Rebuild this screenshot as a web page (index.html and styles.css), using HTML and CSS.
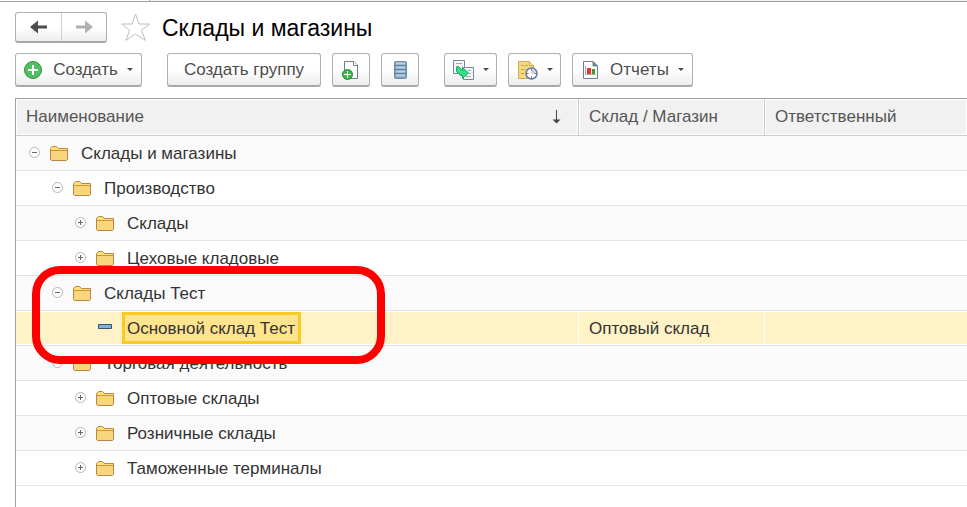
FILE: index.html
```html
<!DOCTYPE html>
<html lang="ru">
<head>
  <meta charset="UTF-8">
  <title>Склады и магазины</title>
  <link rel="stylesheet" href="styles.css">
</head>
<body>

  <svg class="sprite" aria-hidden="true">
    <symbol id="folder" viewBox="0 0 19 16">
      <path d="M1.5 14.5V3.5L3.5 1.5H7.5L9.5 3.5H18.5V14.5L17.5 15.5H2.5Z" fill="#f8d77c" stroke="#bd8543"/>
      <path d="M2 5V4L4 2H7L9 4H18V5Z" fill="#ffe36c"/>
      <path d="M2 5.5H18" stroke="#c8924c"/>
    </symbol>
    <symbol id="minus" viewBox="0 0 12 12">
      <circle cx="5.5" cy="5.5" r="5" fill="#fff" stroke="#b4b4b4"/>
      <path d="M3 5.5H8" stroke="#666"/>
    </symbol>
    <symbol id="plus" viewBox="0 0 12 12">
      <circle cx="5.5" cy="5.5" r="5" fill="#fff" stroke="#b4b4b4"/>
      <path d="M3 5.5H8M5.5 3V8" stroke="#666"/>
    </symbol>
  </svg>

  <div class="tab-strip"><div class="tab"></div></div>

  <main class="page">
    <header class="title-bar">
      <div class="nav-buttons">
        <button class="nav-button" aria-label="Назад">
          <svg width="18" height="14" viewBox="0 0 18 14"><path d="M0 7L8 0.500V5.500H17V8.500H8V13.500Z" fill="#4d4d4d"/></svg>
        </button>
        <button class="nav-button" aria-label="Вперед" disabled>
          <svg width="18" height="14" viewBox="0 0 18 14"><path d="M18 7L10 0.500V5.500H1V8.500H10V13.500Z" fill="#b0b0b0"/></svg>
        </button>
      </div>
      <button class="star" aria-label="В избранное">
        <svg width="30" height="29" viewBox="0 0 30 29"><path d="M14.500 1L18 11H28.500L20.500 17.300L24.300 27.300L14.500 21L5 27.300L8.500 17.300L0.800 11H11Z" fill="#fff" stroke="#b9bfc6"/></svg>
      </button>
      <h1>Склады и магазины</h1>
    </header>

    <div class="toolbar">
      <button class="btn btn-create">
        <svg width="20" height="20" viewBox="0 0 20 20">
          <circle cx="9" cy="10" r="8.500" fill="#4fbf60" stroke="#2e9440"/>
          <path d="M4 10H14M9 5V15" stroke="#fff" stroke-width="2"/>
        </svg>
        <span>Создать</span>
        <span class="caret"></span>
      </button>
      <button class="btn btn-group">Создать группу</button>
      <button class="btn btn-icon" aria-label="Создать копированием">
        <svg width="20" height="20" viewBox="0 0 20 20">
          <path d="M3.500 1.500H13L16.500 5V18.500H3.500Z" fill="#fff" stroke="#6f7f90"/>
          <path d="M12.500 1.500V5.500H16.500" fill="#fff" stroke="#6f7f90"/>
          <circle cx="6.500" cy="14.500" r="5" fill="#43b649" stroke="#2c8a3c"/>
          <path d="M3 14.500H10M6.500 11V18" stroke="#fff"/>
        </svg>
      </button>
      <button class="btn btn-icon" aria-label="Список">
        <svg width="20" height="20" viewBox="0 0 20 20">
          <rect x="4.500" y="1.500" width="12" height="17" rx="1" fill="#7fa1bd" stroke="#6d90ae"/>
          <path d="M6 3.500H15M6 7.500H15M6 11.500H15M6 15.500H15" stroke="#b9d2e4" stroke-width="2"/>
          <path d="M4 5.500H17M4 9.500H17M4 13.500H17" stroke="#6284a1"/>
        </svg>
      </button>
      <button class="btn btn-menu group-start" aria-label="Создать на основании">
        <svg width="22" height="22" viewBox="0 0 22 22">
          <path d="M0.500 1.500H11.500V14.500H0.500Z" fill="#f4f6f8" stroke="#76879a"/>
          <path d="M3 4.500H9M3 7.500H5" stroke="#9aa8b6"/>
          <path d="M10.500 8.500H20.500V20.500H10.500Z" fill="#f4f6f8" stroke="#76879a"/>
          <path d="M15 11.500H18M16 14.500H18M13 17.500H18" stroke="#9aa8b6"/>
          <path d="M3.500 8.500L5.500 7.500L9.500 11.500V8.500L15.500 14L9.500 19.500V16.500H7.500L3.500 12.500Z" fill="#2fe089" stroke="#16a45a" stroke-linejoin="round"/>
        </svg>
        <span class="caret"></span>
      </button>
      <button class="btn btn-menu" aria-label="Напоминание">
        <svg width="22" height="22" viewBox="0 0 22 22">
          <path d="M1.500 2.500H12.500L16.500 6.500V19.500H1.500Z" fill="#f4d981" stroke="#cfaa50"/>
          <path d="M12.500 2.500V6.500H16.500" fill="#fbeab0" stroke="#cfaa50"/>
          <path d="M4 6.500H11M4 10.500H9M4 14.500H7" stroke="#c8a14b" stroke-dasharray="3 1"/>
          <circle cx="14.500" cy="14.500" r="5.500" fill="#fff" stroke="#5580ac" stroke-width="1.500"/>
          <path d="M14.500 14.500V10.500A4 4 0 0 1 18.500 14.500Z" fill="#b5c9e6"/>
          <path d="M14.500 9.500V11.500M14.500 17.500V19.500M9.500 14.500H11.500M17.500 14.500H19.500" stroke="#e03c2c"/>
        </svg>
        <span class="caret"></span>
      </button>
      <button class="btn btn-reports">
        <svg width="20" height="20" viewBox="0 0 20 20">
          <path d="M2.500 1.500H12L16.500 6V18.500H2.500Z" fill="#fff" stroke="#6f7f90"/>
          <path d="M12 1.500V6H16.500Z" fill="#7d8d9c" stroke="#6f7f90"/>
          <path d="M4.500 6V14.500H15" fill="none" stroke="#a3afba"/>
          <path d="M6 8H10V14H6Z" fill="#e93524"/>
          <path d="M11 9H14V14H11Z" fill="#379b2e"/>
        </svg>
        <span>Отчеты</span>
        <span class="caret"></span>
      </button>
    </div>

    <div class="list">
      <table>
        <thead>
          <tr>
            <th class="col-name">
              <div class="sort-head">
                <span>Наименование</span>
                <svg width="9" height="14" viewBox="0 0 9 14"><path d="M4.500 0V11" stroke="#444"/><path d="M0.500 9.500H8.500L4.500 13.500Z" fill="#444"/></svg>
              </div>
            </th>
            <th class="col-type">Склад / Магазин</th>
            <th>Ответственный</th>
          </tr>
        </thead>
        <tbody>
          <tr>
            <td><div class="node">
              <button class="toggle" aria-label="Свернуть"><svg><use href="#minus"/></svg></button>
              <svg class="folder"><use href="#folder"/></svg>
              <span class="label">Склады и магазины</span>
            </div></td>
            <td></td><td></td>
          </tr>
          <tr>
            <td><div class="node level-1">
              <button class="toggle" aria-label="Свернуть"><svg><use href="#minus"/></svg></button>
              <svg class="folder"><use href="#folder"/></svg>
              <span class="label">Производство</span>
            </div></td>
            <td></td><td></td>
          </tr>
          <tr>
            <td><div class="node level-2">
              <button class="toggle" aria-label="Развернуть"><svg><use href="#plus"/></svg></button>
              <svg class="folder"><use href="#folder"/></svg>
              <span class="label">Склады</span>
            </div></td>
            <td></td><td></td>
          </tr>
          <tr>
            <td><div class="node level-2">
              <button class="toggle" aria-label="Развернуть"><svg><use href="#plus"/></svg></button>
              <svg class="folder"><use href="#folder"/></svg>
              <span class="label">Цеховые кладовые</span>
            </div></td>
            <td></td><td></td>
          </tr>
          <tr>
            <td><div class="node level-1">
              <button class="toggle" aria-label="Свернуть"><svg><use href="#minus"/></svg></button>
              <svg class="folder"><use href="#folder"/></svg>
              <span class="label">Склады Тест</span>
            </div></td>
            <td></td><td></td>
          </tr>
          <tr class="selected">
            <td><div class="node level-2">
              <span class="toggle"></span>
              <svg class="folder" viewBox="0 0 19 16"><path d="M3.500 4.500H16.500V8.500H3.500Z" fill="#7fb0d8" stroke="#2f5574"/></svg>
              <span class="label">Основной склад Тест</span>
            </div></td>
            <td>Оптовый склад</td><td></td>
          </tr>
          <tr>
            <td><div class="node level-1">
              <button class="toggle" aria-label="Свернуть"><svg><use href="#minus"/></svg></button>
              <svg class="folder"><use href="#folder"/></svg>
              <span class="label">Торговая деятельность</span>
            </div></td>
            <td></td><td></td>
          </tr>
          <tr>
            <td><div class="node level-2">
              <button class="toggle" aria-label="Развернуть"><svg><use href="#plus"/></svg></button>
              <svg class="folder"><use href="#folder"/></svg>
              <span class="label">Оптовые склады</span>
            </div></td>
            <td></td><td></td>
          </tr>
          <tr>
            <td><div class="node level-2">
              <button class="toggle" aria-label="Развернуть"><svg><use href="#plus"/></svg></button>
              <svg class="folder"><use href="#folder"/></svg>
              <span class="label">Розничные склады</span>
            </div></td>
            <td></td><td></td>
          </tr>
          <tr>
            <td><div class="node level-2">
              <button class="toggle" aria-label="Развернуть"><svg><use href="#plus"/></svg></button>
              <svg class="folder"><use href="#folder"/></svg>
              <span class="label">Таможенные терминалы</span>
            </div></td>
            <td></td><td></td>
          </tr>
        </tbody>
      </table>
      <div class="marker"></div>
    </div>
  </main>

</body>
</html>
```
FILE: styles.css
```css
* {
  box-sizing: border-box;
}
body {
  margin: 0;
  min-height: 100vh;
  display: flex;
  flex-direction: column;
  background-color: #fff;
  color: #333;
  font-family: "Liberation Sans", Arial, sans-serif;
  font-size: 17px;
  line-height: 20px;
}
button {
  font: inherit;
  color: #4d4d4d;
  padding: 0;
  border: none;
  background: none;
}
svg {
  display: block;
  flex: none;
}
.sprite {
  position: absolute;
  width: 0;
  height: 0;
}

/* top */
.tab-strip {
  height: 2px;
  background-color: #f2f2f2;
  border-bottom: 1px solid #a0a0a0;
}
.tab {
  width: 150px;
  height: 1px;
  background-color: #fff;
  border-right: 1px solid #a0a0a0;
}
.page {
  flex: 1;
  display: flex;
  flex-direction: column;
  padding: 10px 0 0 15px;
}
.title-bar {
  display: flex;
  align-items: center;
  height: 31px;
}
.nav-buttons {
  display: flex;
  height: 31px;
  border: 1px solid #b0b0b0;
  border-bottom: 2px solid #a8a8a8;
  border-radius: 3px;
  background: linear-gradient(#fff 50%, #ededed);
}
.nav-button {
  display: flex;
  align-items: center;
  justify-content: center;
  width: 45px;
}
.nav-button + .nav-button {
  border-left: 1px solid #d0d0d0;
}
.star {
  margin-left: 14px;
}
h1 {
  margin: 0 0 0 11px;
  color: #000;
  font-size: 23px;
  font-weight: normal;
  line-height: 28px;
}

/* toolbar */
.toolbar {
  display: flex;
  gap: 11px;
  margin-top: 10px;
}
.btn {
  display: flex;
  align-items: center;
  justify-content: center;
  height: 34px;
  border: 1px solid #b0b0b0;
  border-bottom: 2px solid #a8a8a8;
  border-radius: 3px;
  background: linear-gradient(#fff 50%, #ededed);
}
.btn-create {
  gap: 9px;
  width: 127px;
}
.btn-group {
  width: 154px;
  margin-left: 14px;
}
.btn-icon {
  width: 38px;
}
.btn-menu {
  gap: 8px;
  width: 53px;
}
.group-start {
  margin-left: 14px;
}
.btn-reports {
  gap: 9px;
  width: 121px;
}
.caret {
  border: 3px solid transparent;
  border-top-color: #4d4d4d;
  border-bottom: none;
}

/* list */
.list {
  position: relative;
  flex: 1;
  margin-top: 11px;
  border-top: 1px solid #a0a0a0;
  border-left: 1px solid #a0a0a0;
}
table {
  width: 100%;
  table-layout: fixed;
  border-spacing: 0;
}
th {
  height: 37px;
  padding: 0 10px;
  border-bottom: 1px solid #ccc;
  background-color: #f1f1f1;
  box-shadow: inset 0 0 0 1px #fff;
  color: #555;
  font-weight: normal;
  text-align: left;
}
th + th {
  border-left: 1px solid #ccc;
}
.col-name {
  width: 562px;
}
.col-type {
  width: 186px;
}
.sort-head {
  display: flex;
  align-items: center;
  justify-content: space-between;
  padding-right: 7px;
}
td {
  height: 35px;
  padding: 2px 11px 0;
  border-bottom: 1px solid #e4e4e4;
}
td:first-child {
  padding: 0;
}
tbody tr:nth-child(odd) {
  background-color: #fafafa;
}
.node {
  display: flex;
  align-items: center;
  gap: 8px;
  padding-left: 13px;
}
.level-1 {
  padding-left: 36px;
}
.level-2 {
  padding-left: 59px;
}
.toggle,
.toggle svg {
  width: 12px;
  height: 12px;
}
.folder {
  width: 19px;
  height: 16px;
}
.label {
  padding: 4px 3px 2px 2px;
  border: 3px solid transparent;
}
.selected td {
  background-color: #fef2c6;
  box-shadow: inset 0 1px #fff, inset 0 -1px #fff;
}
.selected td + td {
  box-shadow: inset 1px 1px #fff, inset 0 -1px #fff;
}
.selected .label {
  border-color: #f9ca24;
  background-color: #ffe48e;
}

.marker {
  position: absolute;
  top: 167px;
  left: 16px;
  width: 353px;
  height: 98px;
  border: 8px solid #f00;
  border-radius: 28px;
  pointer-events: none;
}
```
